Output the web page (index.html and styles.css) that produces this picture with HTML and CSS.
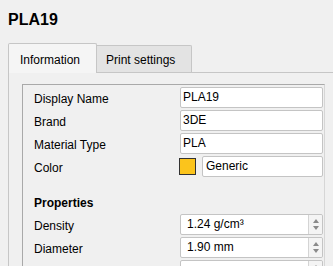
FILE: index.html
```html
<!DOCTYPE html>
<html lang="en">
<head>
<meta charset="UTF-8">
<meta name="viewport" content="width=device-width, initial-scale=1.0">
<title>PLA19</title>
<link rel="stylesheet" href="styles.css">
</head>
<body>

<h1 class="title">PLA19</h1>

<div class="tabs">
  <div class="tab active">Information</div>
  <div class="tab">Print settings</div>
</div>

<div class="pane">
  <div class="frame">
    <div class="form">
      <label>Display Name</label>
      <input type="text" value="PLA19">

      <label>Brand</label>
      <input type="text" value="3DE">

      <label>Material Type</label>
      <input type="text" value="PLA">

      <label>Color</label>
      <div class="color-row">
        <span class="swatch"></span>
        <input type="text" class="color-name" value="Generic">
      </div>

      <h3 class="section">Properties</h3>

      <label>Density</label>
      <div class="spin">
        <input type="text" value="1.24 g/cm³">
        <div class="arrows"><span class="up"></span><span class="down"></span></div>
      </div>

      <label>Diameter</label>
      <div class="spin">
        <input type="text" value="1.90 mm">
        <div class="arrows"><span class="up"></span><span class="down"></span></div>
      </div>

      <label></label>
      <div class="spin">
        <input type="text" value="">
        <div class="arrows"><span class="up"></span><span class="down"></span></div>
      </div>
    </div>
  </div>
</div>

</body>
</html>
```

FILE: styles.css
```css
* {
  box-sizing: border-box;
}

html {
  overflow: hidden;
}

body {
  margin: 0;
  padding-left: 8px;
  background: #f0f0f0;
  font-family: 'Liberation Sans', Arial, sans-serif;
  font-size: 12px;
  color: #000;
  height: 266px;
  overflow: hidden;
}

.title {
  margin: 0 0 13px;
  padding-top: 10px;
  font-size: 16px;
  line-height: 20px;
  font-weight: bold;
}

.tabs {
  display: flex;
  align-items: flex-end;
  height: 29px;
}

.tab {
  width: 95px;
  height: 27px;
  padding: 7px 0 0 9px;
  line-height: 14px;
  background: #e3e3e3;
  border: 1px solid #c6c6c6;
  border-bottom: none;
  border-left: none;
  border-radius: 0 2px 0 0;
}

.tab.active {
  width: 89px;
  height: 30px;
  margin-bottom: -1px;
  padding: 9px 0 0 11px;
  background: #f5f5f5;
  border-left: 1px solid #c6c6c6;
  border-radius: 2px 2px 0 0;
  position: relative;
  z-index: 1;
}

.pane {
  border-top: 1px solid #c6c6c6;
  border-left: 1px solid #c6c6c6;
  padding: 11px 0 0 13px;
}

.frame {
  width: 303px;
  height: 200px;
  border-top: 1px solid #a9a9a9;
  border-left: 1px solid #a9a9a9;
  border-right: 1px solid #d6d6d6;
  padding: 2px 0 0 11px;
}

.form {
  display: grid;
  grid-template-columns: 146px 143px;
  grid-template-rows: repeat(4, 21px) 33px;
  grid-auto-rows: 21px;
  row-gap: 2px;
}

.form label {
  padding-top: 2px;
  line-height: 21px;
}

.form input {
  width: 100%;
  height: 21px;
  margin: 0;
  padding: 0 2px 2px;
  font: inherit;
  color: #000;
  background: #fff;
  border: 1px solid #c4c4c4;
  border-radius: 2px;
  outline: none;
}

.color-row {
  display: flex;
  gap: 6px;
  margin-left: -1px;
  align-items: flex-start;
}

.swatch {
  flex: none;
  width: 17px;
  height: 17px;
  margin-top: 2px;
  background: #fbc41c;
  border: 1px solid #333;
}

.form .color-name {
  flex: 1;
  padding-left: 3px;
}

.section {
  grid-column: 1 / 3;
  margin: 0;
  padding-top: 17px;
  line-height: 15px;
  font-size: 12px;
  font-weight: bold;
}

.spin {
  display: flex;
  height: 21px;
  background: #fff;
  border: 1px solid #c4c4c4;
  border-radius: 2px;
}

.form .spin input {
  flex: 1;
  min-width: 0;
  height: 19px;
  padding-left: 6px;
  border: none;
  background: transparent;
}

.arrows {
  width: 14px;
  flex: none;
  display: flex;
  flex-direction: column;
  align-items: center;
  justify-content: center;
  gap: 3px;
  background: #f4f4f4;
  border-left: 1px solid #d4d4d4;
  border-radius: 0 2px 2px 0;
}

.arrows span {
  width: 0;
  height: 0;
  border-left: 3.5px solid transparent;
  border-right: 3.5px solid transparent;
}

.arrows .up {
  border-bottom: 4px solid #8a8a8a;
}

.arrows .down {
  border-top: 4px solid #8a8a8a;
}
```
